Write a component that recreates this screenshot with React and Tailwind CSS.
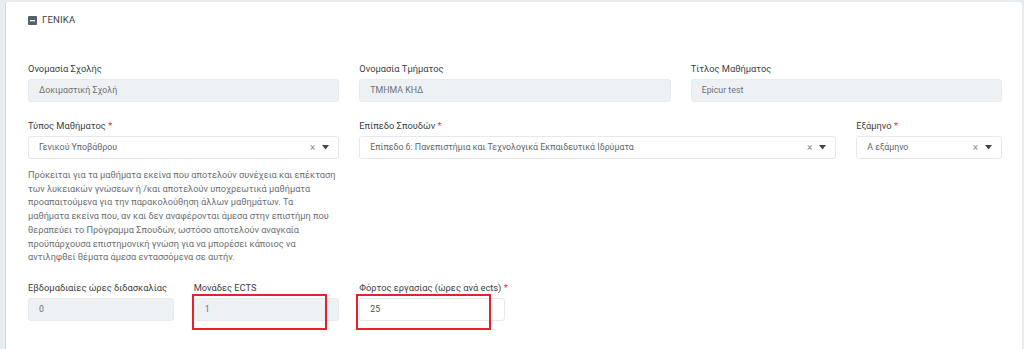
const font = { fontFamily: 'Roboto, "Noto Sans", sans-serif' };

const Label = ({ children, required }) => (
  <div className="h-[14px] text-[9.3px] leading-[14px] text-[#3a3f44] mb-[3px] whitespace-nowrap">
    {children}
    {required && <span className="text-[#e3342f]"> *</span>}
  </div>
);

const ReadOnly = ({ value }) => (
  <div className="h-[23px] rounded-[3px] bg-[#eef1f4] border border-[#e8ebee] px-[10px] flex items-center text-[8.8px] text-[#6b7178]">
    {value}
  </div>
);

const Select = ({ value }) => (
  <div className="h-[23px] rounded-[3px] bg-white border border-[#e6e9ec] pl-[10px] pr-[9px] flex items-center text-[8.8px] text-[#5f656b]">
    <span className="flex-1 truncate">{value}</span>
    <span className="text-[10px] text-[#8a8f94] mr-[7px] leading-none">×</span>
    <svg width="7" height="5" viewBox="0 0 7 5">
      <path d="M0 0h7L3.5 4.5z" fill="#444" />
    </svg>
  </div>
);

const lines = [
  'Πρόκειται για τα μαθήματα εκείνα που αποτελούν συνέχεια και επέκταση',
  'των λυκειακών γνώσεων ή /και αποτελούν υποχρεωτικά μαθήματα',
  'προαπαιτούμενα για την παρακολούθηση άλλων μαθημάτων. Τα',
  'μαθήματα εκείνα που, αν και δεν αναφέρονται άμεσα στην επιστήμη που',
  'θεραπεύει το Πρόγραμμα Σπουδών, ωστόσο αποτελούν αναγκαία',
  'προϋπάρχουσα επιστημονική γνώση για να μπορέσει κάποιος να',
  'αντιληφθεί θέματα άμεσα εντασσόμενα σε αυτήν.',
];

export default function App() {
  return (
    <div className="w-[1024px] h-[349px] bg-[#e9ecef] pt-[2px] pl-[5px] pr-[2px] overflow-hidden" style={font}>
      <div className="h-[360px] bg-white rounded-[3px] border-l border-[#d5d9dd] pl-[22px] pr-[20px] pt-[13px]">
        <div className="flex items-center gap-[5px] h-[10px]">
          <svg width="9" height="9" viewBox="0 0 9 9">
            <rect width="9" height="9" rx="1" fill="#55606b" />
            <rect x="2" y="4" width="5" height="1.3" fill="#fff" />
          </svg>
          <span className="text-[9.5px] text-[#3a3f44] tracking-[0.2px]">ΓΕΝΙΚΑ</span>
        </div>

        <div className="grid grid-cols-12 gap-x-[20px] mt-[37px]">
          <div className="col-span-4">
            <Label>Ονομασία Σχολής</Label>
            <ReadOnly value="Δοκιμαστική Σχολή" />
          </div>
          <div className="col-span-4">
            <Label>Ονομασία Τμήματος</Label>
            <ReadOnly value="ΤΜΗΜΑ ΚΗΔ" />
          </div>
          <div className="col-span-4">
            <Label>Τίτλος Μαθήματος</Label>
            <ReadOnly value="Epicur test" />
          </div>
        </div>

        <div className="grid grid-cols-12 gap-x-[20px] mt-[17px]">
          <div className="col-span-4">
            <Label required>Τύπος Μαθήματος</Label>
            <Select value="Γενικού Υποβάθρου" />
            <div className="mt-[9px] text-[9.2px] leading-[13.7px] text-[#6b7075]">
              {lines.map((l) => (
                <div key={l} className="whitespace-nowrap">{l}</div>
              ))}
            </div>
          </div>
          <div className="col-span-6">
            <Label required>Επίπεδο Σπουδών</Label>
            <Select value="Επίπεδο 6: Πανεπιστήμια και Τεχνολογικά Εκπαιδευτικά Ιδρύματα" />
          </div>
          <div className="col-span-2">
            <Label required>Εξάμηνο</Label>
            <Select value="Α εξάμηνο" />
          </div>
        </div>

        <div className="grid grid-cols-12 gap-x-[20px] mt-[17px]">
          <div className="col-span-2">
            <Label>Εβδομαδιαίες ώρες διδασκαλίας</Label>
            <ReadOnly value="0" />
          </div>
          <div className="col-span-2">
            <Label>Μονάδες ECTS</Label>
            <div className="relative">
              <ReadOnly value="1" />
              <div className="absolute left-[-2px] top-[-4px] w-[135px] h-[36px] border-[2.5px] border-[#e5212b]" />
            </div>
          </div>
          <div className="col-span-2">
            <Label required>Φόρτος εργασίας (ώρες ανά ects)</Label>
            <div className="relative">
              <div className="h-[23px] rounded-[3px] bg-white border border-[#e6e9ec] px-[10px] flex items-center text-[8.8px] text-[#4a4f54]">
                25
              </div>
              <div className="absolute left-[-3px] top-[-4px] w-[135px] h-[36px] border-[2.5px] border-[#e5212b]" />
            </div>
          </div>
        </div>
      </div>
    </div>
  );
}
